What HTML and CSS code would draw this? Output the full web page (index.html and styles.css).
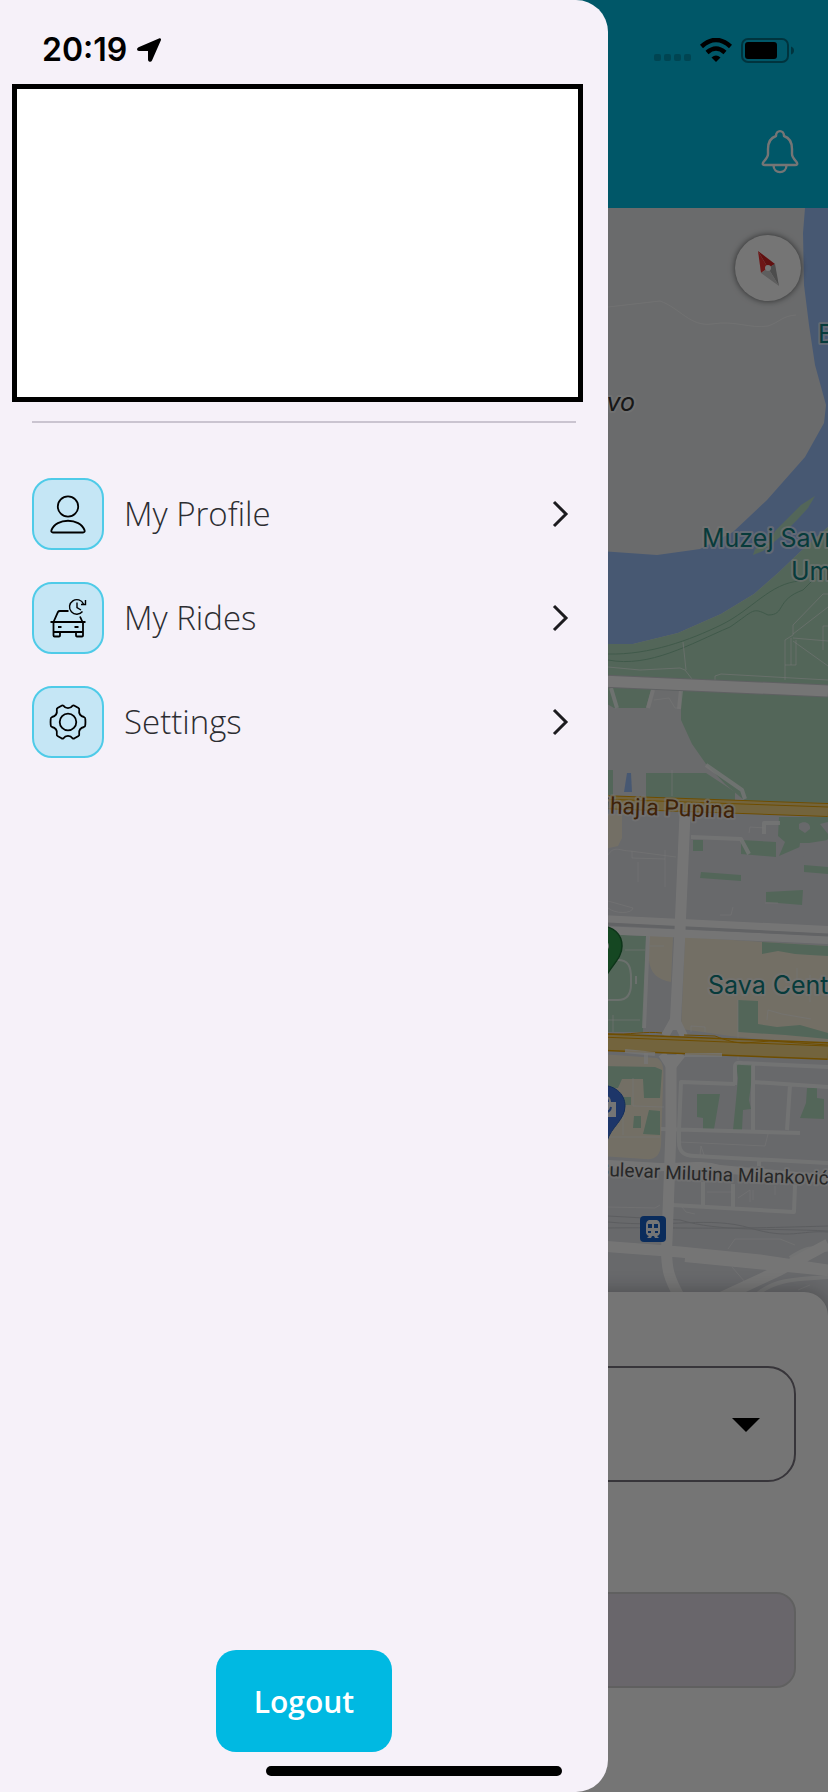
FILE: index.html
```html
<!DOCTYPE html>
<html lang="en">
<head>
    <meta charset="UTF-8">
    <meta name="viewport" content="width=device-width, initial-scale=1.0">
    <title>Rides</title>
    <link rel="stylesheet" href="styles.css">
</head>
<body>
    <div class="home">
        <header class="app-bar">
            <button class="bell-btn" aria-label="Notifications">
                <svg viewBox="0 0 40 46" width="40" height="46" fill="none" stroke="#fff" stroke-width="2.4" stroke-linejoin="round">
                    <path d="M16 8C16 1.500 24 1.500 24 8C30 10 32 15 32 21V26C32 29 34 31 36.500 34C38 36 37 37 35 37H5C3 37 2 36 3.500 34C6 31 8 29 8 26V21C8 15 10 10 16 8Z"/>
                    <path d="M13.500 37C13.500 46.500 26.500 46.500 26.500 37"/>
                </svg>
            </button>
        </header>

        <main class="map">
            <svg class="map-canvas" viewBox="0 208 828 1114" preserveAspectRatio="xMaxYMin slice">
                <rect class="land" y="208" width="828" height="1114"/>
                <path class="block" d="M600 800H828V1322H600Z"/>

                <!-- river and parks -->
                <path class="water" d="M805 208L803 233L804 285L809 325L815 365L826 405L824 423L805 457L767 500L733 532L700 549L657 555L600 551V644H633L678 633L721 614L754 594L778 573L800 552L828 527V208Z"/>
                <path class="park" d="M600 644H633L678 633L721 614L754 594L778 573L800 552L828 527V803L745 801L725 784L706 764L692 744L681 720V691L600 684Z"/>
                <path class="park" d="M815 496L801 505L785 521L775 531L770 542L755 549L753 555L763 551L780 537L797 520L808 508Z"/>
                <path class="park" d="M600 686H652L646 708H614L600 700ZM600 770H613V796H600ZM646 773L706 773L735 792V803L646 798Z"/>
                <path class="water" d="M627 773H631L632 792H624Z"/>
                <path class="trail" d="M608 654C650 655 690 640 721 625S770 583 800 581M608 660C650 668 690 644 730 627C755 610 752 607 768 615C786 615 775 600 803 590L815 578"/>
                <path class="path" d="M608 307L660 301C680 308 690 327 712 324C735 320 750 329 768 326C780 322 782 316 796 315M608 667L640 670L680 668L685 670L692 679M683 642L686 670M715 680V676L721 674L828 680M785 680V640L793 635V625L823 594H828M793 634L828 607M793 638L828 641M793 641L828 666M791 665V638M785 665H796V640M823 650V626H828M654 700L669 698L675 708H680"/>
                <path class="street" d="M611 688L617 708M653 690L648 708M681 690L679 709"/>
                <path class="path" d="M672 770V796"/>
                <path class="street" d="M706 765L742 790L745 799"/>

                <!-- green plots -->
                <path class="park" d="M693 840H703V851H693ZM741 840L776 842V857L741 854ZM779 817H828V840L809 843L779 856L785 842L778 836ZM701 872L741 875V881L700 878ZM804 865L828 867V874L804 872ZM766 892L803 890L802 905L766 902Z"/>
                <path class="block" d="M799 824C804 820 811 823 810 829L805 833L799 829ZM800 843H809V852L804 857L799 850ZM820 824L828 822V834ZM820 846L828 839V857Z"/>
                <path class="sand" d="M600 814H622V838L618 846L600 850Z"/>
                <path class="sand" d="M649 935L673 937L671 982C658 980 650 973 649 960Z"/>
                <path class="sand" d="M685 937L828 946V1048L770 1040L730 1036L681 1029Z"/>
                <path class="park" d="M600 934L646 936L643 1032H600ZM762 942L828 946V956L810 955L795 954L778 951L762 954ZM738 1000L758 1001V1024L777 1027L800 1025L828 1033V1039L785 1035L738 1032Z"/>
                <path class="sand" d="M600 1054L657 1058C664 1062 664 1070 663 1085L661 1145C660 1155 656 1160 645 1159L600 1156Z"/>
                <path class="park" d="M600 1066L655 1067L662 1070L660 1098H644L643 1079H622L618 1088H600ZM649 1110L660 1111V1135L643 1134ZM634 1116H641V1128H633ZM622 1097H631V1105H622ZM697 1094H720L716 1118L714 1129H703V1118L697 1117ZM736 1064H752V1077L749 1100L751 1109L743 1110L742 1130H733L736 1100L738 1078ZM807 1088H817V1098L824 1099V1119L800 1118L806 1103Z"/>

                <!-- small streets -->
                <path class="path" d="M749 833L750 827L765 828M608 855C614 845 620 851 630 851L676 857M632 851V858L665 859M638 862V882M665 850V887M720 915H731L733 907M765 903H778M625 950H645M608 1020H640M613 1015V1032M650 946H664M767 1020L768 1010L782 1014L811 1019M797 968V980M810 975V1002M691 1032V1026L705 1027V1032M633 1078V1106L664 1107M623 1107V1135M608 1137H660M680 1142L765 1146L768 1134M700 1155L701 1146L704 1155M738 1000V1060M608 901L633 908C632 914 615 914 608 908M608 1207L655 1208L660 1205M682 1207L686 1212L695 1214M707 1192H733M738 1198L750 1190V1202M753 1200V1190M775 1195V1186M728 1249L735 1239L780 1239L795 1245M732 1267L745 1282M798 1290L810 1285"/>
                <path class="rail" d="M608 1216L680 1220C720 1232 770 1228 828 1231M608 1222C670 1228 710 1216 750 1228S800 1230 828 1232M608 1228C680 1227 700 1230 828 1226"/>
                <path class="street" d="M691 837L741 839L749 854M764 834V823L780 823M648 936L644 1028M646 1052V1064M735 1085V1067C735 1063 737 1062 742 1063L828 1067M753 1064V1130M679 1130L681 1082L735 1084M753 1082L828 1087M790 1085L787 1130M661 1129L800 1133M679 1130V1142C679 1152 684 1156 695 1156L828 1163M759 1160V1166M703 1182V1207M733 1184V1207M672 1205L794 1212L795 1185"/>
                <path class="track" d="M608 960H618C628 960 631 966 631 978V984C631 996 626 1000 618 1000H608M636 976V984"/>

                <!-- main roads -->
                <path class="road-edge" d="M600 681L828 691"/>
                <path class="road" d="M600 681L828 691"/>
                <path class="road-mid" d="M600 919L828 930M600 930L828 940"/>
                <path class="road-gap" d="M608 924L828 935"/>
                <path class="road" d="M685 814L680 930L675 1030M671 1055L671 1130L667 1240C665 1270 670 1280 681 1300"/>
                <path class="road-mid" d="M675 1018L665 1036M675 1018L684 1036M662 1054L671 1068L682 1054"/>
                <path class="road-mid" d="M608 1164L660 1167C680 1168 700 1163 720 1169L828 1179M685 1258L828 1272"/>
                <path class="road" d="M600 1246L680 1252L760 1260L828 1270M720 1298L780 1270L828 1244"/>
                <path class="street" d="M755 1296C775 1278 800 1279 828 1277M790 1258C805 1248 812 1246 828 1250"/>
                <path class="highway-edge" d="M600 802L828 810"/>
                <path class="highway" d="M600 802L828 810"/>
                <path class="highway-line" d="M600 799L828 807"/>
                <path class="highway-edge wide" d="M600 1042L828 1051"/>
                <path class="highway wide" d="M600 1042L828 1051"/>
                <path class="highway-line" d="M608 1034C630 1035 645 1031 662 1033M684 1035L715 1036C728 1041 735 1043 745 1043L770 1041L828 1045M600 1037L828 1046"/>
                <path class="street" d="M625 1051L655 1054M685 1055L722 1055"/>

                <!-- pins -->
                <path d="M600 926C613 926 622 934 622 946C622 959 611 965 604 980H600Z" fill="#2f9b4a" stroke="#1d7337" stroke-width="1.500"/>
                <circle cx="603" cy="946" r="6" fill="#fff"/>
                <path d="M600 1085C614 1085 625 1093 625 1106C625 1120 611 1127 607 1141H600Z" fill="#4077e5" stroke="#2862c5" stroke-width="1"/>
                <path d="M600 1102H616V1117H600Z" fill="#fff"/>
                <path d="M601 1102C601 1095 610 1095 610 1102" fill="none" stroke="#fff" stroke-width="2"/>
                <path d="M602 1108C603 1114 610 1113 611 1107" fill="none" stroke="#4077e5" stroke-width="2"/>
                <rect x="640" y="1216" width="26" height="26" rx="4" fill="#1761c8"/>
                <path d="M649 1220H657Q660 1221 660 1225V1232Q660 1235 657 1236L659 1238H655L654 1236H652L651 1238H647L649 1236Q646 1235 646 1232V1225Q646 1221 649 1220Z" fill="#fff"/>
                <path d="M648 1224H652V1228H648ZM654 1224H658V1228H654ZM648 1231H651V1233H648ZM655 1231H658V1233H655Z" fill="#1761c8"/>

                <!-- labels -->
                <text class="label area" x="635" y="411" text-anchor="end">Ostrvo</text>
                <text class="label place" x="702" y="547">Muzej Savr</text>
                <text class="label place" x="791" y="580">Um</text>
                <text class="label place" x="818" y="343">B</text>
                <text class="label place" x="708" y="994">Sava Cent</text>
                <text class="label highway-name" x="735" y="818" text-anchor="end" transform="rotate(2 735 818)">Bulevar Mihajla Pupina</text>
                <text class="label street-name" x="660" y="1178" text-anchor="end" transform="rotate(2 660 1178)">Bulevar</text>
                <text class="label street-name" x="665" y="1179" transform="rotate(2 665 1179)">Milutina Milanković</text>
            </svg>

            <button class="compass" aria-label="Reset bearing">
                <svg viewBox="0 0 66 66" width="66" height="66">
                    <path d="M23 16L40 29L33 33Z" fill="#d32323"/>
                    <path d="M23 16L26 38L33 33Z" fill="#f03030"/>
                    <path d="M40 29L44 51L33 33Z" fill="#a8a8a8"/>
                    <path d="M26 38L44 51L33 33Z" fill="#ccc"/>
                    <circle cx="33" cy="33" r="3" fill="#fff"/>
                </svg>
            </button>
        </main>

        <section class="sheet">
            <div class="select-wrap">
                <select class="ride-select" aria-label="Ride">
                    <option value=""></option>
                </select>
                <svg class="caret" viewBox="0 0 28 14" width="28" height="14"><path d="M0 0H28L14 14Z"/></svg>
            </div>
            <button class="confirm-btn" aria-label="Confirm" disabled></button>
        </section>
    </div>

    <div class="scrim"></div>

    <aside class="drawer">
        <div class="user-card"></div>
        <hr class="divider">
        <nav class="menu">
            <a class="menu-item" href="#profile">
                <span class="menu-icon">
                    <svg viewBox="0 0 40 40" width="40" height="40">
                        <circle cx="20" cy="12.500" r="10.200"/>
                        <path d="M5 38.500C3.500 38.500 3 37.500 3.400 36.400C8 23.500 32 23.500 36.600 36.400C37 37.500 36.500 38.500 35 38.500Z"/>
                    </svg>
                </span>
                <span class="menu-label">My Profile</span>
                <svg class="chevron" viewBox="0 0 32 32" width="32" height="32"><path d="M10 4L22 16L10 28"/></svg>
            </a>
            <a class="menu-item" href="#rides">
                <span class="menu-icon">
                    <svg viewBox="0 0 40 40" width="40" height="40">
                        <path d="M2.500 24H37.500M5.500 24L10 14Q10.500 13 12 13H20.500M32 18.500L34.500 24M5.500 24V37.500Q5.500 38.500 6.500 38.500H11Q12 38.500 12 37.500V34M28 34V37.500Q28 38.500 29 38.500H34Q35 38.500 35 37.500V24M5.500 34H35M10 29H13.500M26.500 29H30.500"/>
                        <path stroke-width="1.400" d="M34.500 13.500A7.300 7.300 0 1 1 35.500 6M37.500 2V6.500H33M29 4.500V9.500L33 12"/>
                    </svg>
                </span>
                <span class="menu-label">My Rides</span>
                <svg class="chevron" viewBox="0 0 32 32" width="32" height="32"><path d="M10 4L22 16L10 28"/></svg>
            </a>
            <a class="menu-item" href="#settings">
                <span class="menu-icon">
                    <svg viewBox="0 0 40 40" width="40" height="40">
                        <circle cx="20" cy="20" r="8.300"/>
                        <path d="M15.500 3.800C17.500 7 22.500 7 24.500 3.800Q25.500 3 26.500 3.700L30.500 6Q31.500 6.600 31.200 8C30.500 11.500 32.500 14.500 36 15Q37.200 15.300 37.300 17Q37.600 20 37.300 23Q37.200 24.700 36 25C32.500 25.500 30.500 28.500 31.200 32Q31.500 33.400 30.500 34L26.500 36.300Q25.500 37 24.500 36.200C22.500 33 17.500 33 15.500 36.200Q14.500 37 13.500 36.300L9.500 34Q8.500 33.400 8.800 32C9.500 28.500 7.500 25.500 4 25Q2.800 24.700 2.700 23Q2.400 20 2.700 17Q2.800 15.300 4 15C7.500 14.500 9.500 11.500 8.800 8Q8.500 6.600 9.500 6L13.500 3.700Q14.500 3 15.500 3.800Z"/>
                    </svg>
                </span>
                <span class="menu-label">Settings</span>
                <svg class="chevron" viewBox="0 0 32 32" width="32" height="32"><path d="M10 4L22 16L10 28"/></svg>
            </a>
        </nav>
        <button class="logout-btn">Logout</button>
    </aside>

    <div class="status-bar">
        <div class="status-left">
            <span class="time">20:19</span>
            <svg viewBox="0 0 26 26" width="26" height="26"><path d="M23.500 1.200Q25.500 1 25 3L16 23.500Q15 25.500 13 24.500Q12 24 12 22.500V14H3Q1 14 1 12.300Q1 11 2.500 10.200Z"/></svg>
        </div>
        <div class="status-right">
            <svg class="signal" viewBox="0 0 37 24" width="37" height="24">
                <rect x="0" y="16" width="7" height="7" rx="2"/>
                <rect x="10" y="16" width="7" height="7" rx="2"/>
                <rect x="20" y="16" width="7" height="7" rx="2"/>
                <rect x="30" y="16" width="7" height="7" rx="2"/>
            </svg>
            <svg viewBox="0 0 32 24" width="32" height="24">
                <path d="M1.500 8.500Q16 -4.500 30.500 8.500M7 14.500Q16 6.500 25 14.500" fill="none" stroke="#000" stroke-width="4.500"/>
                <path d="M11.500 19.500Q16 15.500 20.500 19.500L16 24Z"/>
            </svg>
            <svg viewBox="0 0 53 25" width="53" height="25">
                <rect x="1" y="1" width="46" height="23" rx="6" fill="none" stroke="#000" stroke-width="2" opacity=".4"/>
                <rect x="4" y="4" width="32" height="17" rx="3"/>
                <path d="M50 8.500Q53 9.500 53 12.500T50 16.500Z" opacity=".4"/>
            </svg>
        </div>
    </div>
    <div class="home-indicator"></div>
</body>
</html>
```

FILE: styles.css
```css
* {
    box-sizing: border-box;
}

body {
    margin: 0;
    position: relative;
    min-height: 100vh;
    overflow: hidden;
    font-family: "Open Sans", sans-serif;
}

button {
    border: none;
    padding: 0;
    background: none;
    cursor: pointer;
}

svg {
    display: block;
}

.home {
    min-height: 100vh;
    display: flex;
    flex-direction: column;
}

/* app bar */
.app-bar {
    height: 208px;
    padding: 0 28px 34px 28px;
    display: flex;
    justify-content: flex-end;
    align-items: flex-end;
    background: #00bde2;
}

/* map */
.map {
    position: relative;
    flex: 1;
    overflow: hidden;
    background: #e7e9eb;
}

.map-canvas {
    position: absolute;
    top: 0;
    left: 0;
    width: 100%;
    height: 100%;
}

.land { fill: #e7e9eb; }
.block { fill: #e2e4e9; }
.water { fill: #9cc0f9; }
.park { fill: #b5dec2; }
.sand { fill: #faf2dd; }

.trail,
.path,
.rail,
.street,
.track,
.road,
.road-edge,
.road-mid,
.road-gap,
.highway,
.highway-edge,
.highway-line {
    fill: none;
    stroke-linejoin: round;
}

.trail { stroke: #8cc3a2; stroke-width: 1; }
.path { stroke: #fff; stroke-width: 1; opacity: .6; }
.rail { stroke: #c8cbd0; stroke-width: 1; }
.street { stroke: #fff; stroke-width: 4; opacity: .8; }
.track { stroke: #fff; stroke-width: 2; opacity: .7; }
.road { stroke: #fff; stroke-width: 11; }
.road-edge { stroke: #cfd2d6; stroke-width: 13; }
.road-mid { stroke: #fff; stroke-width: 8; }
.road-gap { stroke: #d5d7dc; stroke-width: 3; }
.highway { stroke: #fadb86; stroke-width: 12; }
.highway-edge { stroke: #f0a800; stroke-width: 14; }
.highway-line { stroke: #f0a800; stroke-width: 1; }
.highway.wide { stroke-width: 15; }
.highway-edge.wide { stroke-width: 18; }

.label {
    font-family: Inter, sans-serif;
    font-size: 25px;
    stroke: #fff;
    stroke-width: 4px;
    stroke-opacity: .6;
    stroke-linejoin: round;
    paint-order: stroke;
}

.area {
    font-style: italic;
    fill: #333;
}

.place {
    fill: #108080;
}

.highway-name {
    font-family: Roboto, sans-serif;
    font-size: 23px;
    fill: #8a4a10;
}

.street-name {
    font-family: Roboto, sans-serif;
    font-size: 19px;
    fill: #555;
}

.compass {
    position: absolute;
    top: 27px;
    right: 27px;
    width: 66px;
    height: 66px;
    border-radius: 50%;
    background: #fff;
    box-shadow: 0 0 6px rgba(0,0,0,0.6);
}

/* bottom sheet */
.sheet {
    position: relative;
    margin-top: -30px;
    padding: 74px 32px 104px 32px;
    display: flex;
    flex-direction: column;
    gap: 110px;
    border-radius: 24px 24px 0 0;
    background: #fff;
    box-shadow: 0 0 20px rgba(0,0,0,0.3);
}

.select-wrap {
    position: relative;
}

.ride-select {
    display: block;
    width: 100%;
    height: 116px;
    border: 2px solid #79747e;
    border-radius: 28px;
    background: #fff;
    appearance: none;
}

.caret {
    position: absolute;
    top: 52px;
    right: 36px;
    pointer-events: none;
}

.confirm-btn {
    height: 96px;
    border: 2px solid #d2d2d2;
    border-radius: 20px;
    background: #e5dfea;
}

.scrim {
    position: absolute;
    inset: 0;
    background: rgba(0,0,0,0.54);
}

/* drawer */
.drawer {
    position: absolute;
    top: 0;
    bottom: 0;
    left: 0;
    width: 608px;
    max-width: 85%;
    padding: 84px 32px 40px 32px;
    display: flex;
    flex-direction: column;
    border-radius: 0 32px 32px 0;
    background: #f6f1f9;
}

.user-card {
    height: 318px;
    margin: 0 -7px 0 -20px;
    border: 5px solid #000;
    background: #fff;
}

.divider {
    width: 100%;
    height: 2px;
    margin: 19px 0 55px 0;
    border: none;
    background: #cac4d0;
}

.menu {
    display: flex;
    flex-direction: column;
    gap: 32px;
}

.menu-item {
    display: flex;
    align-items: center;
    gap: 20px;
    color: #2c2d31;
    text-decoration: none;
}

.menu-icon {
    width: 72px;
    height: 72px;
    display: flex;
    justify-content: center;
    align-items: center;
    border: 2px solid #4fcbe8;
    border-radius: 20px;
    background: #c5e6f5;
}

.menu-icon svg {
    fill: none;
    stroke: #000;
    stroke-width: 1.8;
}

.menu-label {
    flex: 1;
    font-size: 33px;
    line-height: 40px;
    font-weight: 350;
}

.chevron {
    fill: none;
    stroke: #1c1b1f;
    stroke-width: 3;
}

.logout-btn {
    width: 176px;
    height: 102px;
    margin-top: auto;
    align-self: center;
    border-radius: 20px;
    background: #00b9e2;
    color: #fff;
    font-family: inherit;
    font-size: 30px;
    font-weight: 600;
}

/* system overlays */
.status-bar {
    position: absolute;
    top: 0;
    left: 0;
    right: 0;
    height: 100px;
    padding: 0 34px 0 42px;
    display: flex;
    justify-content: space-between;
    align-items: center;
    pointer-events: none;
}

.status-left,
.status-right {
    display: flex;
    align-items: center;
    gap: 9px;
}

.time {
    font-family: Inter, sans-serif;
    font-size: 32px;
    line-height: 40px;
    font-weight: 600;
}

.signal {
    opacity: .2;
}

.home-indicator {
    position: absolute;
    bottom: 16px;
    left: 50%;
    width: 296px;
    height: 10px;
    margin-left: -148px;
    border-radius: 5px;
    background: #000;
}
```
